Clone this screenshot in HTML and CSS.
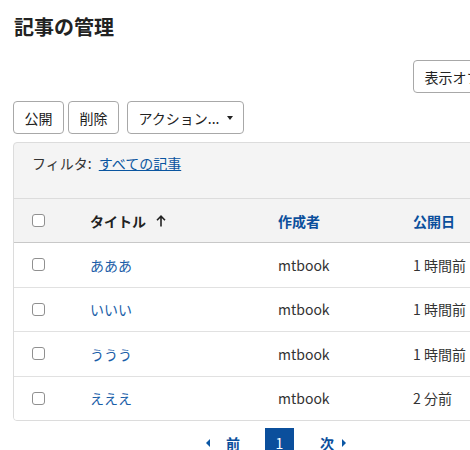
FILE: index.html
```html
<!DOCTYPE html>
<html lang="ja">
<head>
<meta charset="utf-8">
<title>記事の管理</title>
<link rel="stylesheet" href="styles.css">
</head>
<body>
<div class="page">
  <h1 class="title">記事の管理</h1>
  <div class="view-row">
    <button class="btn">表示オプション <span class="caret"></span></button>
  </div>
  <div class="actions">
    <button class="btn">公開</button>
    <button class="btn">削除</button>
    <button class="btn dd">アクション... <span class="caret"></span></button>
  </div>
  <div class="panel">
    <div class="filter">フィルタ: <a class="link" href="#">すべての記事</a></div>
    <table class="list">
      <thead>
        <tr>
          <th class="c-cb"><input type="checkbox" class="cb"></th>
          <th class="c-title"><span class="sort">タイトル
            <svg class="arrow" width="10" height="12" viewBox="0 0 10 12"><path d="M5 11.5V1.2M1 5.2L5 1.2L9 5.2" fill="none" stroke="#222" stroke-width="1.6"/></svg></span></th>
          <th class="c-author"><a class="hlink" href="#">作成者</a></th>
          <th class="c-date"><a class="hlink" href="#">公開日</a></th>
        </tr>
      </thead>
      <tbody>
        <tr><td class="c-cb"><input type="checkbox" class="cb"></td><td><a class="rlink" href="#">あああ</a></td><td>mtbook</td><td>1 時間前</td></tr>
        <tr><td class="c-cb"><input type="checkbox" class="cb"></td><td><a class="rlink" href="#">いいい</a></td><td>mtbook</td><td>1 時間前</td></tr>
        <tr><td class="c-cb"><input type="checkbox" class="cb"></td><td><a class="rlink" href="#">ううう</a></td><td>mtbook</td><td>1 時間前</td></tr>
        <tr><td class="c-cb"><input type="checkbox" class="cb"></td><td><a class="rlink" href="#">えええ</a></td><td>mtbook</td><td>2 分前</td></tr>
      </tbody>
    </table>
  </div>
  <nav class="pager">
    <a class="pg-link prev" href="#"><span class="tri-left"></span>前</a>
    <span class="pg-current">1</span>
    <a class="pg-link next" href="#">次<span class="tri-right"></span></a>
  </nav>
</div>
</body>
</html>
```
FILE: styles.css
```css
html, body {
  margin: 0;
  padding: 0;
  overflow: hidden;
  background: #fff;
}
body {
  font-family: "Noto Sans CJK JP", "Noto Sans", sans-serif;
  font-size: 14px;
  color: #222;
}
.page {
  width: 526px;
  padding: 13px 0 0 13px;
}
.title {
  margin: 0 0 0 1px;
  font-size: 20px;
  line-height: 28px;
  font-weight: 700;
  color: #222;
}
.view-row {
  display: flex;
  justify-content: flex-end;
  margin-top: 19px;
  margin-right: -9px;
}
.btn {
  font: inherit;
  color: #222;
  height: 33px;
  padding: 0 10.5px;
  border: 1px solid #a8a8a8;
  border-radius: 4px;
  background: #fff;
  display: inline-flex;
  align-items: center;
  gap: 8px;
  line-height: 1;
  white-space: nowrap;
}
.caret {
  display: inline-block;
  width: 0;
  height: 0;
  border-left: 3.5px solid transparent;
  border-right: 3.5px solid transparent;
  border-top: 4px solid #222;
}
.actions {
  display: flex;
  gap: 4px;
  margin-top: 8px;
}
.actions .dd {
  margin-left: 4px;
  padding-right: 10px;
}
.panel {
  margin-top: 8px;
  border: 1px solid #dcdcdc;
  border-radius: 4px;
  background: #f4f4f4;
  overflow: hidden;
}
.filter {
  padding: 10px 18px 24px;
  line-height: 21px;
  color: #333;
}
.link {
  color: #0a55a0;
  text-decoration: underline;
  margin-left: 4px;
}
.list {
  width: 100%;
  border-collapse: separate;
  border-spacing: 0;
  background: #fff;
}
.list th {
  height: 43px;
  padding: 0;
  background: #f3f3f3;
  border-top: 1px solid #dcdcdc;
  border-bottom: 1px solid #c8c8c8;
  text-align: left;
  font-weight: 700;
  vertical-align: middle;
}
.list td {
  height: 43.5px;
  padding: 0;
  border-bottom: 1px solid #e1e1e1;
  vertical-align: middle;
  color: #333;
}
.list tbody tr:last-child td {
  border-bottom: none;
}
.c-cb {
  width: 58px;
  padding-left: 18px !important;
}
.c-title {
  width: 188px;
}
.c-author {
  width: 135px;
}
.cb {
  -webkit-appearance: none;
  appearance: none;
  display: block;
  width: 13px;
  height: 13px;
  margin: 0;
  border: 1px solid #909090;
  border-radius: 3px;
  background: #fff;
}
.sort {
  display: inline-flex;
  align-items: center;
  gap: 10px;
  color: #222;
}
.hlink {
  color: #0b4f9c;
  text-decoration: none;
}
.rlink {
  color: #1a5ea8;
  text-decoration: none;
}
.pager {
  display: flex;
  justify-content: center;
  align-items: center;
  gap: 25px;
  margin-top: 7px;
  height: 30px;
}
.pg-link {
  display: inline-flex;
  align-items: center;
  color: #0b4f9c;
  font-weight: 700;
  text-decoration: none;
}
.prev { gap: 16px; }
.next { gap: 8px; margin-left: 1px; }
.tri-left {
  width: 0;
  height: 0;
  border-top: 4px solid transparent;
  border-bottom: 4px solid transparent;
  border-right: 4px solid #0b57a4;
}
.tri-right {
  width: 0;
  height: 0;
  border-top: 4px solid transparent;
  border-bottom: 4px solid transparent;
  border-left: 4px solid #0b57a4;
}
.pg-current {
  width: 29px;
  height: 30px;
  background: #0b4f9c;
  color: #fff;
  display: flex;
  align-items: center;
  justify-content: center;
}
```
